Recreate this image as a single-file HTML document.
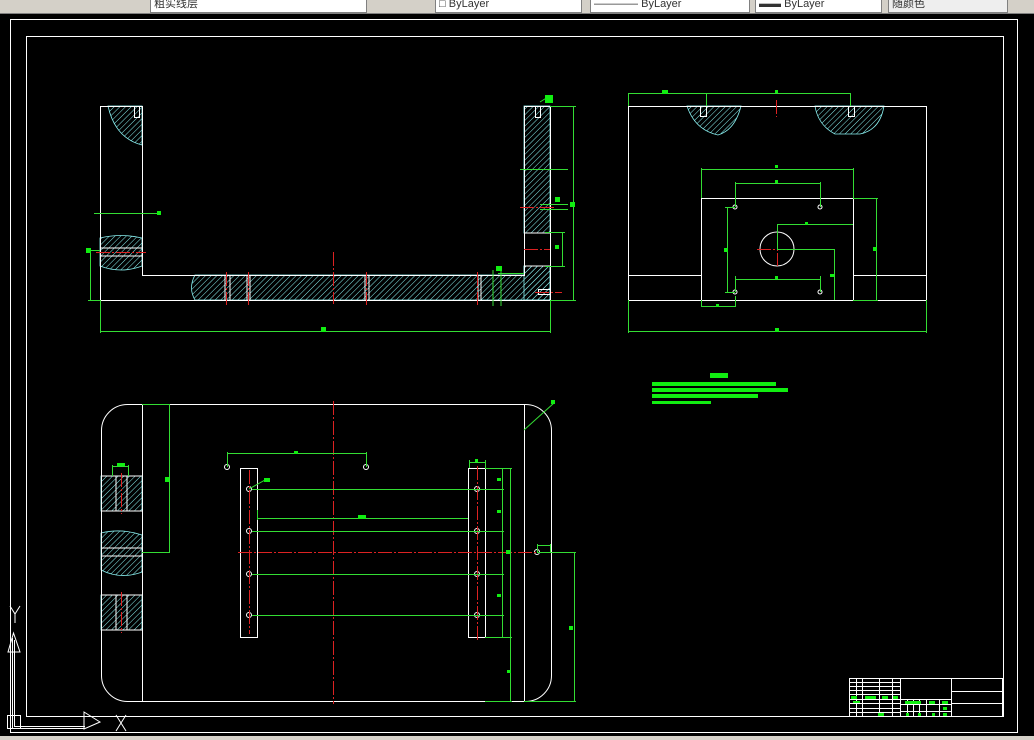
<!DOCTYPE html>
<html><head><meta charset="utf-8"><style>
html,body{margin:0;padding:0;background:#000;width:1034px;height:740px;overflow:hidden}
.tb{position:absolute;left:0;top:0;width:1034px;height:13px;background:#d4d0c8;border-bottom:1px solid #808080;font:11px "Liberation Sans","Noto Sans CJK SC",sans-serif;color:#333}
.tb div{position:absolute;top:-3px;height:14px;background:#fff;border:1px solid #808080;line-height:12px;overflow:hidden}
</style></head><body>
<div class="tb">
<div style="left:150px;width:215px">&nbsp;粗实线层</div>
<div style="left:435px;width:145px">&nbsp;□ ByLayer</div>
<div style="left:590px;width:158px">&nbsp;―――― ByLayer</div>
<div style="left:755px;width:125px">&nbsp;▬▬ ByLayer</div>
<div style="left:888px;width:118px;background:#eee">&nbsp;随颜色</div>
</div>
<div style="position:absolute;left:0;top:736px;width:1034px;height:4px;background:#d4d0c8"></div>
<svg width="1034" height="740" style="position:absolute;left:0;top:0" xmlns="http://www.w3.org/2000/svg">
<defs>
<pattern id="h" width="4" height="4" patternUnits="userSpaceOnUse" patternTransform="rotate(45)">
<line x1="0" y1="0" x2="0" y2="4" stroke="#8ee" stroke-width="1"/></pattern>
</defs>
<g fill="none" stroke="#fff" stroke-width="1">
<rect x="10.5" y="19.5" width="1007" height="713"/>
<rect x="26.5" y="36.5" width="977" height="680"/>
</g>
<g fill="url(#h)" stroke="#8ee" stroke-width="0.8">
<path d="M108 106 L142 106 L142 145 Q115 138 108 106Z"/>
<path d="M100 238 Q121 233 142 238 L142 266 Q121 274 100 266Z"/>
<rect x="524" y="106" width="26" height="127"/>
<rect x="524" y="266" width="26" height="34"/>
<path d="M195 275 L524 275 L524 266 L550 266 L550 300 L195 300 Q188 288 195 275Z"/>
<path d="M687 106 L741 106 Q735 130 718 135 Q695 130 687 106Z"/>
<path d="M815 106 L884 106 Q880 130 860 134 L835 134 Q818 125 815 106Z"/>
<rect x="101" y="476" width="41" height="35"/>
<path d="M101 533 Q121 528 142 535 L142 572 Q121 580 101 570Z"/>
<rect x="101" y="595" width="41" height="35"/>
</g>
<g fill="none" stroke="#fff" stroke-width="1">
<path d="M100.5 106.5 H142.5 V275.5 H524.5 V106.5 H550.5 V300.5 H100.5Z"/>
<line x1="524" y1="233" x2="550" y2="233"/><line x1="524" y1="266" x2="550" y2="266"/>
<line x1="100" y1="248" x2="142" y2="248"/><line x1="100" y1="256" x2="142" y2="256"/>
<rect x="134.5" y="106.5" width="5" height="11"/><rect x="535.5" y="106.5" width="5" height="11"/>
<line x1="225" y1="275" x2="225" y2="300"/><line x1="230" y1="275" x2="230" y2="300"/>
<line x1="247" y1="275" x2="247" y2="300"/><line x1="250" y1="275" x2="250" y2="300"/>
<line x1="365" y1="275" x2="365" y2="300"/><line x1="369" y1="275" x2="369" y2="300"/>
<line x1="478" y1="275" x2="478" y2="300"/><line x1="481" y1="275" x2="481" y2="300"/>
<rect x="538.5" y="289.5" width="12" height="5"/>
<rect x="628.5" y="106.5" width="298" height="194"/>
<line x1="628" y1="275.5" x2="701" y2="275.5"/><line x1="853" y1="275.5" x2="926" y2="275.5"/>
<path d="M701.5 300 V198.5 H853.5 V300"/>
<circle cx="777" cy="249" r="17"/>
<rect x="700.5" y="106.5" width="6" height="10"/><rect x="848.5" y="106.5" width="6" height="10"/>
<circle cx="735" cy="207" r="2"/><circle cx="820" cy="207" r="2"/><circle cx="735" cy="292" r="2"/><circle cx="820" cy="292" r="2"/>
<rect x="101.5" y="404.5" width="450" height="297" rx="26"/>
<line x1="142.5" y1="404" x2="142.5" y2="701"/><line x1="524.5" y1="404" x2="524.5" y2="701"/>
<rect x="240.5" y="468.5" width="17" height="169"/><rect x="468.5" y="468.5" width="17" height="169"/>
<line x1="116" y1="476" x2="116" y2="511"/><line x1="127" y1="476" x2="127" y2="511"/>
<line x1="116" y1="595" x2="116" y2="630"/><line x1="127" y1="595" x2="127" y2="630"/>
<line x1="101" y1="548" x2="142" y2="548"/><line x1="101" y1="556" x2="142" y2="556"/>
<line x1="101" y1="511" x2="142" y2="511"/><line x1="101" y1="476" x2="142" y2="476"/>
<line x1="101" y1="595" x2="142" y2="595"/><line x1="101" y1="630" x2="142" y2="630"/>
<g>
<circle cx="249" cy="489" r="2.5"/><circle cx="249" cy="531" r="2.5"/><circle cx="249" cy="574" r="2.5"/><circle cx="249" cy="615" r="2.5"/>
<circle cx="477" cy="489" r="2.5"/><circle cx="477" cy="531" r="2.5"/><circle cx="477" cy="574" r="2.5"/><circle cx="477" cy="615" r="2.5"/>
<circle cx="227" cy="467" r="2.5"/><circle cx="366" cy="467" r="2.5"/><circle cx="537" cy="552" r="2.5"/>
</g>
<rect x="849.5" y="678.5" width="153" height="38"/>
<line x1="900.5" y1="678" x2="900.5" y2="716"/><line x1="951.5" y1="678" x2="951.5" y2="716"/>
<line x1="951" y1="691.5" x2="1002" y2="691.5"/><line x1="951" y1="703.5" x2="1002" y2="703.5"/>
<path d="M849 682.5H900M849 686.5H900M849 690.5H900M849 694.5H900M849 699.5H900M849 703.5H900M849 708.5H900M849 712.5H900"/>
<path d="M856.5 678V716M862.5 678V716M879.5 678V716M892.5 678V716"/>
<path d="M900 699.5H951M900 704.5H951M900 711.5H951M907.5 699V716M913.5 699V716M919.5 699V716M926.5 699V716M939.5 699V716"/>
<path d="M12.5 638 V728.5 H85"/><path d="M14.5 640 V726.5 H85"/>
<rect x="7.5" y="715.5" width="13" height="13"/>
<path d="M13.5 633 L8 652 H20Z M84 712 L100 722 L84 729Z"/>
<path d="M10 606 L15 614 L20 606 M15 614 V623"/>
<path d="M116 715 L126 731 M126 715 L116 731"/>
</g>
<g stroke="#d22" stroke-width="1" stroke-dasharray="14 2 2 2">
<line x1="333.5" y1="401" x2="333.5" y2="704"/>
<line x1="238" y1="552.5" x2="575" y2="552.5"/>
<line x1="333.5" y1="252" x2="333.5" y2="304"/>
<line x1="776.5" y1="100" x2="776.5" y2="117"/>
<line x1="757" y1="249.5" x2="797" y2="249.5"/><line x1="777.5" y1="233" x2="777.5" y2="266"/>
<line x1="249.5" y1="470" x2="249.5" y2="634"/><line x1="477.5" y1="466" x2="477.5" y2="640"/>
<line x1="96" y1="252.5" x2="146" y2="252.5"/>
<line x1="121.5" y1="473" x2="121.5" y2="514"/><line x1="121.5" y1="592" x2="121.5" y2="633"/>
<line x1="226.5" y1="272" x2="226.5" y2="305"/><line x1="248.5" y1="272" x2="248.5" y2="305"/>
<line x1="366.5" y1="272" x2="366.5" y2="305"/><line x1="477.5" y1="272" x2="477.5" y2="305"/>
<line x1="520" y1="207.5" x2="554" y2="207.5"/><line x1="524" y1="249.5" x2="550" y2="249.5"/>
<line x1="535" y1="292.5" x2="562" y2="292.5"/>
</g>
<g fill="none" stroke="#3d3" stroke-width="1">
<path d="M100.5 300V333M550.5 300V333M100 331.5H550"/>
<path d="M550 106.5H576M550 300.5H576M573.5 106V300"/>
<path d="M88 250.5H100M90.5 250V300M88 300.5H100"/>
<path d="M94 213.5H160M520 169.5H568M540 204.5H568M540 209.5H568M545 232.5H565M545 266.5H565M562.5 232V266"/>
<path d="M493 270V306M501 270V306M498 273.5H524"/>
<path d="M628.5 93V106M628 93.5H850M850.5 93V106M706.5 93V106"/>
<path d="M628.5 300V333M926.5 300V333M628 331.5H926"/>
<path d="M701.5 168V198M853.5 168V198M701 169.5H853"/>
<path d="M735.5 182V207M820.5 182V207M735 183.5H820"/>
<path d="M735.5 276V292M820.5 276V292M735 279.5H820"/>
<path d="M725 207.5H735M725 292.5H735M727.5 207V292"/>
<path d="M777 224.5H853M777.5 224V249M777 249.5H835M834.5 249V300"/>
<path d="M853 198.5H878M853 300.5H878M876.5 198V300"/>
<path d="M701.5 300V307M735.5 296V307M701 306.5H735"/>
<path d="M142 404.5H170M142 552.5H170M169.5 404V552"/>
<path d="M227.5 452V467M366.5 452V467M227 453.5H366"/>
<path d="M257.5 510V520M257 518.5H468"/>
<path d="M252 489.5H504M252 531.5H504M252 574.5H504M252 615.5H504"/>
<path d="M485 468.5H512M485 637.5H512M502.5 468V637M510.5 468V701M485 701.5H512"/>
<path d="M537 552.5H576M524 701.5H576M574.5 552V701"/>
<path d="M469.5 460V468M485.5 460V468M469 462.5H485"/>
<path d="M537.5 544V552M550.5 544V552M537 545.5H550"/>
<path d="M112.5 465V476M128.5 465V476M112 466.5H128"/>
<path d="M524 430L554 403M249 489L265 480M540 102L548 97"/>
</g>
<g fill="#1e1">
<rect x="321" y="327" width="5" height="5"/><rect x="570" y="202" width="5" height="5"/><rect x="86" y="248" width="5" height="5"/>
<rect x="157" y="211" width="4" height="4"/><rect x="545" y="95" width="8" height="8"/><rect x="555" y="197" width="5" height="5"/>
<rect x="555" y="245" width="4" height="4"/><rect x="496" y="266" width="6" height="5"/>
<rect x="662" y="90" width="6" height="4"/><rect x="775" y="90" width="3" height="3"/><rect x="775" y="328" width="4" height="4"/>
<rect x="775" y="165" width="3" height="3"/><rect x="775" y="180" width="3" height="3"/><rect x="775" y="276" width="3" height="3"/>
<rect x="724" y="248" width="4" height="4"/><rect x="873" y="247" width="4" height="4"/><rect x="830" y="274" width="4" height="3"/>
<rect x="805" y="222" width="3" height="3"/><rect x="716" y="304" width="3" height="3"/>
<rect x="165" y="477" width="4" height="5"/><rect x="294" y="451" width="4" height="3"/><rect x="358" y="515" width="8" height="4"/>
<rect x="264" y="478" width="6" height="4"/><rect x="117" y="463" width="8" height="3"/><rect x="475" y="459" width="3" height="3"/>
<rect x="506" y="550" width="4" height="4"/><rect x="569" y="626" width="4" height="4"/><rect x="551" y="400" width="4" height="4"/>
<rect x="497" y="478" width="4" height="3"/><rect x="497" y="510" width="4" height="3"/><rect x="497" y="594" width="4" height="3"/><rect x="507" y="670" width="4" height="3"/>
<rect x="652" y="382" width="124" height="4"/><rect x="652" y="388" width="136" height="4"/><rect x="652" y="394" width="106" height="4"/><rect x="652" y="401" width="59" height="3"/>
<rect x="710" y="373" width="18" height="5"/>
<rect x="851" y="696" width="6" height="3"/><rect x="865" y="696" width="11" height="3"/><rect x="882" y="696" width="6" height="3"/><rect x="893" y="696" width="5" height="3"/>
<rect x="853" y="701" width="7" height="2"/><rect x="878" y="713" width="6" height="3"/>
<rect x="905" y="701" width="16" height="3"/><rect x="929" y="701" width="6" height="3"/><rect x="942" y="701" width="6" height="3"/>
<rect x="943" y="707" width="4" height="3"/><rect x="906" y="713" width="3" height="3"/><rect x="918" y="713" width="3" height="3"/><rect x="932" y="713" width="3" height="3"/><rect x="943" y="713" width="4" height="3"/>
</g>
</svg>
</body></html>
